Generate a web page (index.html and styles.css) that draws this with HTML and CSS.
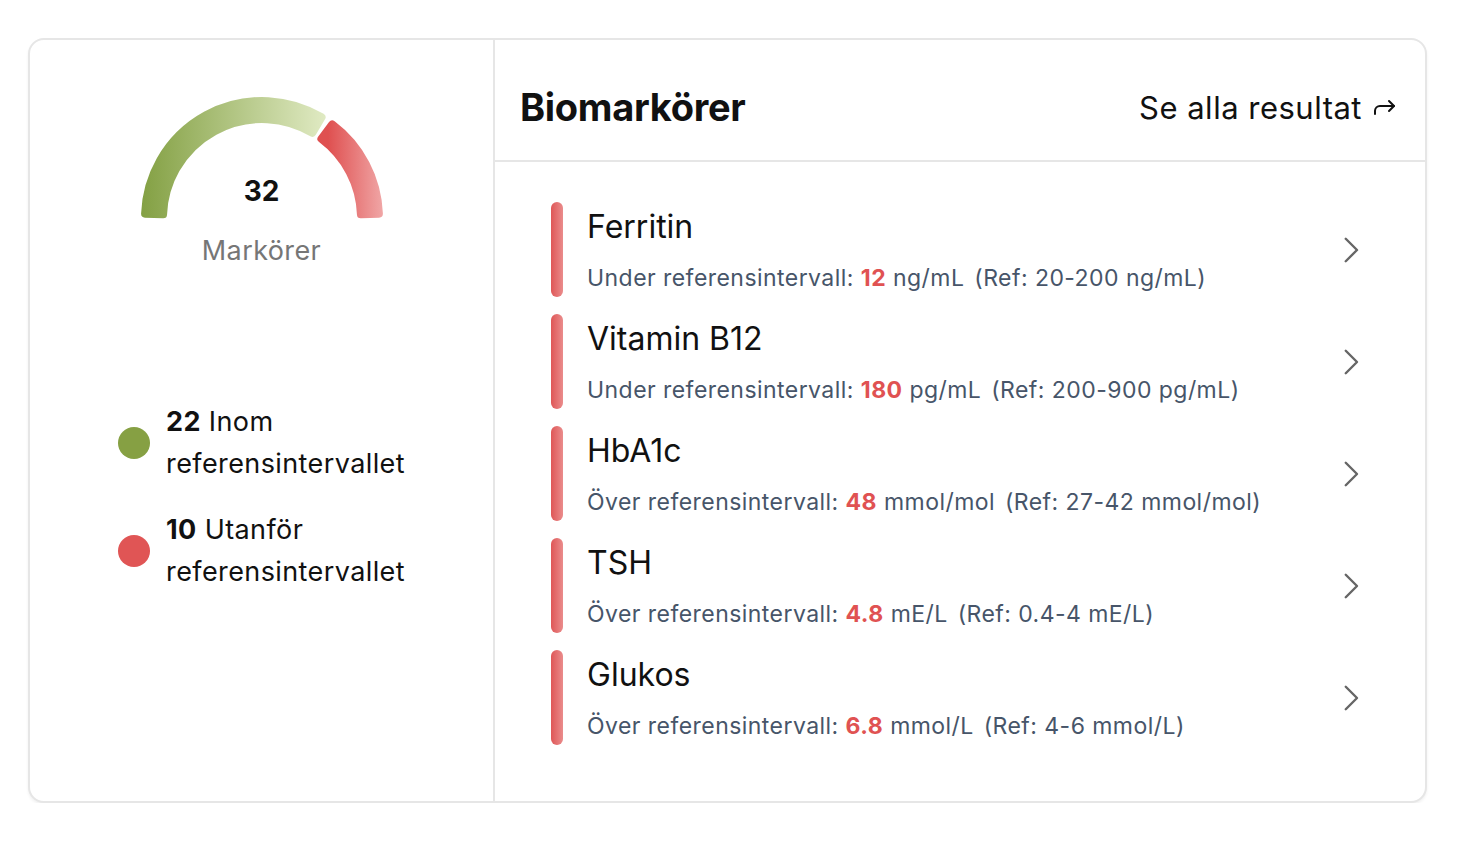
FILE: index.html
```html
<!DOCTYPE html>
<html lang="sv">
<head>
<meta charset="utf-8">
<title>Biomarkörer</title>
<link rel="stylesheet" href="styles.css">
</head>
<body>
<div class="card">
  <aside class="summary">
    <div class="gauge">
      <svg class="gauge-svg" width="260" height="130" viewBox="0 0 260 130">
        <defs>
          <linearGradient id="gGreen" gradientUnits="userSpaceOnUse" x1="9" y1="0" x2="194" y2="0">
            <stop offset="0" stop-color="#83a043"/>
            <stop offset="1" stop-color="#e0eac3"/>
          </linearGradient>
          <linearGradient id="gRed" gradientUnits="userSpaceOnUse" x1="196" y1="0" x2="251" y2="0">
            <stop offset="0" stop-color="#df5050"/>
            <stop offset="1" stop-color="#f0a6a6"/>
          </linearGradient>
        </defs>
        <path d="M 13.08 121.71 A 117 117 0 0 1 189.56 25.29 L 180.39 40.79 A 99 99 0 0 0 31.07 122.37 Z" fill="url(#gGreen)" stroke="url(#gGreen)" stroke-width="8" stroke-linejoin="round"/>
        <path d="M 200.25 32.44 A 117 117 0 0 1 246.92 121.71 L 228.93 122.37 A 99 99 0 0 0 189.44 46.83 Z" fill="url(#gRed)" stroke="url(#gRed)" stroke-width="8" stroke-linejoin="round"/>
      </svg>
      <div class="gauge-value">32</div>
    </div>
    <div class="gauge-label">Markörer</div>

    <ul class="legend">
      <li class="legend-item">
        <span class="dot dot-green"></span>
        <span class="legend-text"><b>22</b> Inom<br>referensintervallet</span>
      </li>
      <li class="legend-item">
        <span class="dot dot-red"></span>
        <span class="legend-text"><b>10</b> Utanför<br>referensintervallet</span>
      </li>
    </ul>
  </aside>

  <section class="markers">
    <header class="markers-header">
      <h1 class="markers-title">Biomarkörer</h1>
      <a class="see-all" href="#">Se alla resultat
        <svg class="see-all-icon" width="26" height="20" viewBox="0 0 26 20" fill="none" stroke="#111" stroke-width="2" stroke-linecap="round" stroke-linejoin="round">
          <path d="M3 15 V12 a5 5 0 0 1 5 -5 H22"/>
          <path d="M17 2 L22 7 L17 12"/>
        </svg>
      </a>
    </header>

    <ul class="marker-list">
      <li class="marker">
        <span class="marker-bar"></span>
        <div class="marker-body">
          <div class="marker-name">Ferritin</div>
          <div class="marker-info">Under referensintervall: <b class="val">12</b> ng/mL <span class="ref">(Ref: 20-200 ng/mL)</span></div>
        </div>
        <svg class="chev" width="36" height="36" viewBox="0 0 24 24" fill="none" stroke="#666" stroke-width="1.6" stroke-linecap="round" stroke-linejoin="round"><path d="m8.5 4.5 7.5 7.5-7.5 7.5"/></svg>
      </li>
      <li class="marker">
        <span class="marker-bar"></span>
        <div class="marker-body">
          <div class="marker-name">Vitamin B12</div>
          <div class="marker-info">Under referensintervall: <b class="val">180</b> pg/mL <span class="ref">(Ref: 200-900 pg/mL)</span></div>
        </div>
        <svg class="chev" width="36" height="36" viewBox="0 0 24 24" fill="none" stroke="#666" stroke-width="1.6" stroke-linecap="round" stroke-linejoin="round"><path d="m8.5 4.5 7.5 7.5-7.5 7.5"/></svg>
      </li>
      <li class="marker">
        <span class="marker-bar"></span>
        <div class="marker-body">
          <div class="marker-name">HbA1c</div>
          <div class="marker-info">Över referensintervall: <b class="val">48</b> mmol/mol <span class="ref">(Ref: 27-42 mmol/mol)</span></div>
        </div>
        <svg class="chev" width="36" height="36" viewBox="0 0 24 24" fill="none" stroke="#666" stroke-width="1.6" stroke-linecap="round" stroke-linejoin="round"><path d="m8.5 4.5 7.5 7.5-7.5 7.5"/></svg>
      </li>
      <li class="marker">
        <span class="marker-bar"></span>
        <div class="marker-body">
          <div class="marker-name">TSH</div>
          <div class="marker-info">Över referensintervall: <b class="val">4.8</b> mE/L <span class="ref">(Ref: 0.4-4 mE/L)</span></div>
        </div>
        <svg class="chev" width="36" height="36" viewBox="0 0 24 24" fill="none" stroke="#666" stroke-width="1.6" stroke-linecap="round" stroke-linejoin="round"><path d="m8.5 4.5 7.5 7.5-7.5 7.5"/></svg>
      </li>
      <li class="marker">
        <span class="marker-bar"></span>
        <div class="marker-body">
          <div class="marker-name">Glukos</div>
          <div class="marker-info">Över referensintervall: <b class="val">6.8</b> mmol/L <span class="ref">(Ref: 4-6 mmol/L)</span></div>
        </div>
        <svg class="chev" width="36" height="36" viewBox="0 0 24 24" fill="none" stroke="#666" stroke-width="1.6" stroke-linecap="round" stroke-linejoin="round"><path d="m8.5 4.5 7.5 7.5-7.5 7.5"/></svg>
      </li>
    </ul>
  </section>
</div>
</body>
</html>
```

FILE: styles.css
```css
* { box-sizing: border-box; }

html, body {
  margin: 0;
  padding: 0;
  background: #ffffff;
}

body {
  font-family: Inter, "Noto Sans", "Liberation Sans", sans-serif;
  color: #111111;
  padding: 38px 0 0 28px;
}

.card {
  width: 1399px;
  height: 765px;
  border: 2px solid #e6e6e6;
  border-radius: 16px;
  background: #fff;
  box-shadow: 0 2px 3px rgba(0, 0, 0, 0.06);
  display: flex;
  overflow: hidden;
}

/* ---------- left summary ---------- */
.summary {
  width: 465px;
  flex: 0 0 465px;
  border-right: 2px solid #e6e6e6;
  display: flex;
  flex-direction: column;
  align-items: center;
  padding-top: 52px;
}

.gauge {
  position: relative;
  width: 260px;
  height: 130px;
}

.gauge-svg {
  display: block;
}

.gauge-value {
  position: absolute;
  left: 0;
  right: 0;
  top: 83px;
  text-align: center;
  font-size: 28px;
  line-height: 32px;
  font-weight: 700;
  color: #111;
}

.gauge-label {
  margin-top: 13px;
  font-size: 27px;
  line-height: 32px;
  letter-spacing: 0.4px;
  color: #767676;
}

.legend {
  list-style: none;
  margin: 134px 0 0 0;
  padding: 0;
  display: flex;
  flex-direction: column;
  gap: 24px;
}

.legend-item {
  display: flex;
  align-items: center;
  gap: 16px;
}

.dot {
  width: 32px;
  height: 32px;
  border-radius: 50%;
  flex: 0 0 32px;
}

.dot-green { background: #86a043; }
.dot-red { background: #e05555; }

.legend-text {
  font-size: 27px;
  line-height: 42px;
  letter-spacing: 0.4px;
  color: #111;
}

.legend-text b { font-weight: 700; }

/* ---------- right markers ---------- */
.markers {
  flex: 1;
  display: flex;
  flex-direction: column;
}

.markers-header {
  height: 122px;
  padding: 14px 27px 0 25px;
  border-bottom: 2px solid #e6e6e6;
  display: flex;
  align-items: center;
  justify-content: space-between;
}

.markers-title {
  margin: 0;
  font-size: 38px;
  font-weight: 700;
  letter-spacing: -0.3px;
  color: #111;
}

.see-all {
  display: flex;
  align-items: center;
  gap: 10px;
  font-size: 31px;
  letter-spacing: 0.5px;
  color: #111;
  text-decoration: none;
}

.see-all-icon { display: block; margin-top: 4px; }

.marker-list {
  list-style: none;
  margin: 0;
  padding: 40px 56px 0 56px;
  display: flex;
  flex-direction: column;
  gap: 17px;
}

.marker {
  display: flex;
  align-items: center;
  height: 95px;
}

.marker-bar {
  align-self: stretch;
  width: 12px;
  flex: 0 0 12px;
  border-radius: 6px;
  background: linear-gradient(to right, #df5757, #ea8c8c);
}

.marker-body {
  flex: 1;
  padding-left: 24px;
  display: flex;
  flex-direction: column;
  padding-top: 1px;
}

.marker-name {
  font-size: 32px;
  line-height: 40px;
  color: #111;
}

.marker-info {
  margin-top: 15px;
  font-size: 23px;
  line-height: 32px;
  letter-spacing: 0.45px;
  color: #475569;
}

.marker-info .val {
  color: #e05252;
  font-weight: 700;
}

.marker-info .ref { margin-left: 3px; }

.chev {
  display: block;
  flex: 0 0 36px;
}
```
